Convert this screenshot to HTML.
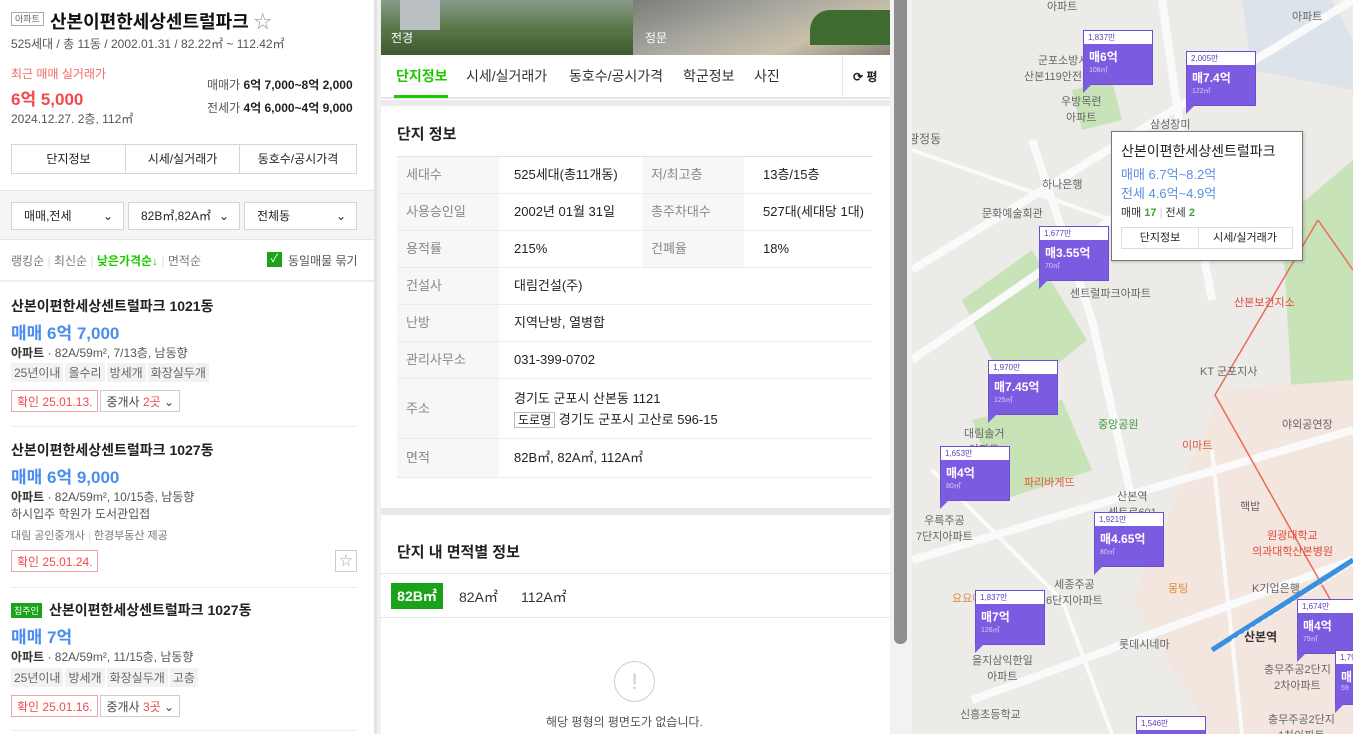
<!DOCTYPE html>
<html style="overflow:hidden;height:734px"><head><meta charset="utf-8"><style>
*{box-sizing:border-box;margin:0;padding:0}
body{width:1353px;height:734px;overflow:hidden;position:relative;font-family:"Liberation Sans","Noto Sans CJK KR",sans-serif;color:#222;background:#fff}
.a{position:absolute;white-space:nowrap}
.btn{position:absolute;border:1px solid #d5d5d5;font-size:12px;text-align:center;background:#fff}
.tag{display:inline-block;background:#f2f2f2;color:#666;font-size:12px;padding:1px 3px;margin-right:2px}
.cf{display:inline-block;border:1px solid #f4a3a3;color:#f2494d;font-size:12px;padding:2px 5px;height:22px}
.ag{display:inline-block;border:1px solid #ccc;color:#444;font-size:12px;padding:2px 5px;height:22px;margin-left:2px}
.row{position:absolute;left:397px;width:476px;border-bottom:1px solid #ececec;font-size:13px}
.row .l{position:absolute;left:0;top:0;bottom:0;width:102px;background:#f7f7f7;color:#888;padding-left:9px}
.row .l2{position:absolute;left:245px;top:0;bottom:0;width:102px;background:#f7f7f7;color:#888;padding-left:9px}
.mk{position:absolute;width:70px;height:55px;background:#7b5ce0;border:1px solid #6a4fd0}
.mk .h{background:#fff;color:#5a43b8;font-size:8px;height:13px;line-height:13px;padding-left:4px}
.mk .p{color:#fff;font-size:12px;font-weight:bold;padding:4px 0 0 5px}
.mk .s{color:#d8cff7;font-size:7px;padding-left:5px}
.mk:after{content:"";position:absolute;left:-1px;bottom:-9px;border-left:9px solid #7b5ce0;border-bottom:9px solid transparent}
.ml{position:absolute;font-size:11px;color:#666;text-align:center;white-space:nowrap}
</style></head><body>

<!-- LEFT PANEL -->
<div class="a" style="left:11px;top:12px;border:1px solid #aaa;font-size:9px;color:#666;padding:0 3px;line-height:12px">아파트</div>
<div class="a" style="left:50px;top:8px;font-size:18px;font-weight:bold;color:#111">산본이편한세상센트럴파크 <span style="font-weight:normal;color:#999">☆</span></div>
<div class="a" style="left:11px;top:35px;font-size:12px;color:#555">525세대 / 총 11동 / 2002.01.31 / 82.22㎡ ~ 112.42㎡</div>
<div class="a" style="left:11px;top:65px;font-size:12px;color:#f4666a">최근 매매 실거래가</div>
<div class="a" style="left:11px;top:85px;font-size:17px;font-weight:bold;color:#f2494d">6억 5,000</div>
<div class="a" style="left:11px;top:110px;font-size:12px;color:#555">2024.12.27. 2층, 112㎡</div>
<div class="a" style="left:207px;top:76px;font-size:12px;color:#555">매매가 <b style="color:#222">6억 7,000~8억 2,000</b></div>
<div class="a" style="left:207px;top:99px;font-size:12px;color:#555">전세가 <b style="color:#222">4억 6,000~4억 9,000</b></div>
<div class="btn" style="left:11px;top:144px;width:115px;height:30px;line-height:28px">단지정보</div>
<div class="btn" style="left:125px;top:144px;width:115px;height:30px;line-height:28px">시세/실거래가</div>
<div class="btn" style="left:239px;top:144px;width:118px;height:30px;line-height:28px">동호수/공시가격</div>
<div class="a" style="left:0;top:190px;width:374px;height:50px;background:#f5f5f5;border-top:1px solid #e5e5e5;border-bottom:1px solid #e5e5e5"></div>
<div class="btn" style="left:11px;top:202px;width:113px;height:28px;line-height:26px;text-align:left;padding-left:12px">매매,전세<span style="position:absolute;right:10px">⌄</span></div>
<div class="btn" style="left:128px;top:202px;width:112px;height:28px;line-height:26px;text-align:left;padding-left:12px">82B㎡,82A㎡<span style="position:absolute;right:10px">⌄</span></div>
<div class="btn" style="left:244px;top:202px;width:113px;height:28px;line-height:26px;text-align:left;padding-left:12px">전체동<span style="position:absolute;right:10px">⌄</span></div>
<div class="a" style="left:11px;top:252px;font-size:12px;color:#777">랭킹순 <span style="color:#ddd">|</span> 최신순 <span style="color:#ddd">|</span> <b style="color:#1ec800">낮은가격순↓</b> <span style="color:#ddd">|</span> 면적순</div>
<div class="a" style="left:267px;top:252px;width:15px;height:15px;background:#1aa31a;color:#fff;font-size:11px;text-align:center;line-height:15px">✓</div>
<div class="a" style="left:288px;top:252px;font-size:12px;color:#555">동일매물 묶기</div>
<div class="a" style="left:0;top:280px;width:374px;height:2px;background:#eee"></div>

<div class="a" style="left:11px;top:296px;font-size:14px;font-weight:bold;color:#222">산본이편한세상센트럴파크 1021동</div>
<div class="a" style="left:11px;top:319px;font-size:17px;font-weight:bold;color:#4a8cf0">매매 6억 7,000</div>
<div class="a" style="left:11px;top:344px;font-size:12px;color:#555"><b style="color:#333">아파트</b> · 82A/59m², 7/13층, 남동향</div>
<div class="a" style="left:11px;top:363px"><span class="tag">25년이내</span><span class="tag">올수리</span><span class="tag">방세개</span><span class="tag">화장실두개</span></div>
<div class="a" style="left:11px;top:390px"><span class="cf">확인 25.01.13.</span><span class="ag">중개사 <span style="color:#f2494d">2곳</span> ⌄</span></div>
<div class="a" style="left:11px;top:426px;width:346px;height:1px;background:#eee"></div>

<div class="a" style="left:11px;top:440px;font-size:14px;font-weight:bold">산본이편한세상센트럴파크 1027동</div>
<div class="a" style="left:11px;top:463px;font-size:17px;font-weight:bold;color:#4a8cf0">매매 6억 9,000</div>
<div class="a" style="left:11px;top:488px;font-size:12px;color:#555"><b style="color:#333">아파트</b> · 82A/59m², 10/15층, 남동향</div>
<div class="a" style="left:11px;top:505px;font-size:12px;color:#555">하시입주 학원가 도서관입접</div>
<div class="a" style="left:11px;top:527px;font-size:11px;color:#777">대림 공인중개사 <span style="color:#ddd">|</span> 한경부동산 제공</div>
<div class="a" style="left:11px;top:550px"><span class="cf">확인 25.01.24.</span></div>
<div class="a" style="left:335px;top:550px;width:22px;height:22px;border:1px solid #ccc;color:#aaa;font-size:13px;text-align:center;line-height:20px">☆</div>
<div class="a" style="left:11px;top:587px;width:346px;height:1px;background:#eee"></div>

<div class="a" style="left:11px;top:603px;background:#1aa31a;color:#fff;font-size:9px;padding:1px 3px">집주인</div>
<div class="a" style="left:49px;top:600px;font-size:14px;font-weight:bold">산본이편한세상센트럴파크 1027동</div>
<div class="a" style="left:11px;top:623px;font-size:17px;font-weight:bold;color:#4a8cf0">매매 7억</div>
<div class="a" style="left:11px;top:648px;font-size:12px;color:#555"><b style="color:#333">아파트</b> · 82A/59m², 11/15층, 남동향</div>
<div class="a" style="left:11px;top:668px"><span class="tag">25년이내</span><span class="tag">방세개</span><span class="tag">화장실두개</span><span class="tag">고층</span></div>
<div class="a" style="left:11px;top:695px"><span class="cf">확인 25.01.16.</span><span class="ag">중개사 <span style="color:#f2494d">3곳</span> ⌄</span></div>
<div class="a" style="left:11px;top:730px;width:346px;height:1px;background:#eee"></div>
<div class="a" style="left:374px;top:0;width:3px;height:734px;background:#e3e3e3"></div>
<div class="a" style="left:377px;top:0;width:4px;height:734px;background:#f0f0f0"></div>

<!-- MIDDLE PANEL -->
<div class="a" style="left:381px;top:0;width:252px;height:55px;background:linear-gradient(180deg,#8a9a8c 0%,#5d7c4e 45%,#3e5a30 100%)"></div>
<div class="a" style="left:400px;top:0;width:40px;height:30px;background:#b9bfc2"></div>
<div class="a" style="left:633px;top:0;width:257px;height:55px;background:linear-gradient(160deg,#7a7d78 0%,#a8a7a0 40%,#c9c0a8 70%,#8a8078 100%)"></div>
<div class="a" style="left:810px;top:10px;width:80px;height:35px;background:#3f6a30;border-radius:20px 0 0 0"></div>
<div class="a" style="left:391px;top:29px;font-size:12px;color:#fff">전경</div>
<div class="a" style="left:645px;top:29px;font-size:12px;color:#fff">정문</div>
<div class="a" style="left:381px;top:55px;width:509px;height:44px;background:#fff;border-bottom:2px solid #e5e5e5"></div>
<div class="a" style="left:396px;top:66px;font-size:14px;font-weight:bold;color:#1ec800">단지정보</div>
<div class="a" style="left:394px;top:95px;width:54px;height:3px;background:#1ec800"></div>
<div class="a" style="left:466px;top:66px;font-size:14px;color:#333">시세/실거래가</div>
<div class="a" style="left:569px;top:66px;font-size:14px;color:#333">동호수/공시가격</div>
<div class="a" style="left:683px;top:66px;font-size:14px;color:#333">학군정보</div>
<div class="a" style="left:754px;top:66px;font-size:14px;color:#333">사진</div>
<div class="a" style="left:842px;top:55px;width:48px;height:44px;border-left:1px solid #e5e5e5;font-size:12px;line-height:44px;padding-left:10px;font-weight:bold">⟳ 평</div>
<div class="a" style="left:381px;top:100px;width:509px;height:6px;background:#ebebeb"></div>
<div class="a" style="left:397px;top:123px;font-size:15px;font-weight:bold">단지 정보</div>
<div class="a" style="left:397px;top:156px;width:476px;height:1px;background:#e0e0e0"></div>
<div class="row" style="top:157px;height:37px;line-height:36px"><div class="l">세대수</div><span class="a" style="left:117px">525세대(총11개동)</span><div class="l2">저/최고층</div><span class="a" style="left:366px">13층/15층</span></div>
<div class="row" style="top:194px;height:37px;line-height:36px"><div class="l">사용승인일</div><span class="a" style="left:117px">2002년 01월 31일</span><div class="l2">총주차대수</div><span class="a" style="left:366px">527대(세대당 1대)</span></div>
<div class="row" style="top:231px;height:37px;line-height:36px"><div class="l">용적률</div><span class="a" style="left:117px">215%</span><div class="l2">건폐율</div><span class="a" style="left:366px">18%</span></div>
<div class="row" style="top:268px;height:37px;line-height:36px"><div class="l">건설사</div><span class="a" style="left:117px">대림건설(주)</span></div>
<div class="row" style="top:305px;height:37px;line-height:36px"><div class="l">난방</div><span class="a" style="left:117px">지역난방, 열병합</span></div>
<div class="row" style="top:342px;height:37px;line-height:36px"><div class="l">관리사무소</div><span class="a" style="left:117px">031-399-0702</span></div>
<div class="row" style="top:379px;height:60px"><div class="l" style="line-height:60px">주소</div><span class="a" style="left:117px;top:9px">경기도 군포시 산본동 1121</span><span class="a" style="left:117px;top:30px"><span style="border:1px solid #bbb;padding:0 3px;font-size:12px">도로명</span> 경기도 군포시 고산로 596-15</span></div>
<div class="row" style="top:439px;height:39px;line-height:38px"><div class="l">면적</div><span class="a" style="left:117px">82B㎡, 82A㎡, 112A㎡</span></div>
<div class="a" style="left:381px;top:508px;width:509px;height:7px;background:#e8e8e8"></div>
<div class="a" style="left:397px;top:541px;font-size:15px;font-weight:bold">단지 내 면적별 정보</div>
<div class="a" style="left:381px;top:573px;width:509px;height:1px;background:#e5e5e5"></div>
<div class="a" style="left:391px;top:583px;width:52px;height:26px;background:#1aa31a;color:#fff;font-size:14px;font-weight:bold;line-height:26px;text-align:center">82B㎡</div>
<div class="a" style="left:459px;top:587px;font-size:14px;color:#333">82A㎡</div>
<div class="a" style="left:521px;top:587px;font-size:14px;color:#333">112A㎡</div>
<div class="a" style="left:381px;top:617px;width:509px;height:1px;background:#e5e5e5"></div>
<div class="a" style="left:614px;top:661px;width:41px;height:41px;border:1px solid #ccc;border-radius:50%;color:#ccc;font-size:22px;text-align:center;line-height:39px">!</div>
<div class="a" style="left:546px;top:713px;font-size:12px;color:#555">해당 평형의 평면도가 없습니다.</div>
<div class="a" style="left:890px;top:0;width:22px;height:734px;background:#f2f2f2"></div>
<div class="a" style="left:894px;top:0;width:13px;height:644px;background:#8f8f8f;border-radius:0 0 6px 6px"></div>

<!-- MAP -->
<div class="a" style="left:912px;top:0;width:441px;height:734px;background:#ecebe8;overflow:hidden">
<svg width="441" height="734" style="position:absolute;left:0;top:0">
<g fill="#c8e3b8"><path d="M50 300 L120 250 L175 340 L100 400Z"/><path d="M60 420 L150 400 L180 470 L90 500Z"/><path d="M370 220 L441 160 L441 380 L380 400Z"/><path d="M160 90 L200 80 L210 120 L170 130Z"/></g>
<g fill="#f3e6df"><path d="M310 390 L441 380 L441 734 L300 734 L220 600Z"/></g>
<g fill="#dde3ea"><path d="M330 0 L420 0 L441 40 L441 90 L340 70Z"/></g>
<g stroke="#fafafa" stroke-width="8" fill="none"><path d="M0 270 L441 0"/><path d="M0 360 L160 250 L300 140"/><path d="M120 140 L180 320 L220 500"/><path d="M0 560 L200 500 L441 430"/><path d="M60 700 L441 560"/><path d="M250 0 L270 140 L300 300"/></g>
<g stroke="#fafafa" stroke-width="4" fill="none"><path d="M0 150 L200 220"/><path d="M20 470 L150 600 L200 734"/><path d="M300 450 L330 734"/></g>
<path d="M406 220 L441 270 M406 220 L303 395 L441 640" stroke="#ee6a5a" stroke-width="1.5" fill="none"/>
<path d="M300 650 L441 560" stroke="#3b8fe0" stroke-width="5" fill="none"/>
<path d="M320 640 L441 565" stroke="#fff" stroke-width="1" stroke-dasharray="4 3" fill="none"/>
</svg>
<div class="ml" style="left:135px;top:-2px">아파트</div><div class="ml" style="left:380px;top:8px">아파트</div>
<div class="ml" style="left:112px;top:52px">군포소방서<br>산본119안전센터</div>
<div class="ml" style="left:149px;top:93px">우방목련<br>아파트</div>
<div class="ml" style="left:238px;top:116px">삼성장미</div>
<div class="ml" style="left:-4px;top:130px;font-size:12px">광정동</div>
<div class="ml" style="left:130px;top:176px">하나은행</div>
<div class="ml" style="left:70px;top:205px">문화예술회관</div>
<div class="ml" style="left:158px;top:285px">센트럴파크아파트</div>
<div class="ml" style="left:322px;top:294px;color:#e04a3a">산본보건지소</div>
<div class="ml" style="left:288px;top:363px">KT 군포지사</div>
<div class="ml" style="left:186px;top:416px;color:#3a9a3a">중앙공원</div>
<div class="ml" style="left:270px;top:437px;color:#e05a3a">이마트</div>
<div class="ml" style="left:52px;top:425px">대림솔거<br>아파트</div>
<div class="ml" style="left:370px;top:416px">야외공연장</div>
<div class="ml" style="left:112px;top:474px;color:#e05a3a">파리바게뜨</div>
<div class="ml" style="left:196px;top:488px">산본역<br>센트로601</div>
<div class="ml" style="left:4px;top:512px">우륵주공<br>7단지아파트</div>
<div class="ml" style="left:328px;top:498px">핵밥</div>
<div class="ml" style="left:340px;top:527px;color:#e04a3a">원광대학교<br>의과대학산본병원</div>
<div class="ml" style="left:220px;top:542px;color:#e08a3a">도어</div>
<div class="ml" style="left:134px;top:576px">세종주공<br>6단지아파트</div>
<div class="ml" style="left:256px;top:580px;color:#e08a3a">몽팅</div>
<div class="ml" style="left:340px;top:580px">K기업은행</div>
<div class="ml" style="left:40px;top:590px;color:#e08a3a">요요여</div>
<div class="ml" style="left:332px;top:628px;font-size:12px;font-weight:bold;color:#333">산본역</div>
<div class="ml" style="left:207px;top:636px">롯데시네마</div>
<div class="ml" style="left:60px;top:652px">을지삼익한일<br>아파트</div>
<div class="ml" style="left:352px;top:661px">충무주공2단지<br>2차아파트</div>
<div class="ml" style="left:48px;top:706px">신흥초등학교</div>
<div class="ml" style="left:356px;top:711px">충무주공2단지<br>1차아파트</div>

<div class="mk" style="left:171px;top:30px"><div class="h">1,837만</div><div class="p">매6억</div><div class="s">108㎡</div></div>
<div class="mk" style="left:274px;top:51px"><div class="h">2,005만</div><div class="p">매7.4억</div><div class="s">122㎡</div></div>
<div class="mk" style="left:127px;top:226px"><div class="h">1,677만</div><div class="p">매3.55억</div><div class="s">70㎡</div></div>
<div class="mk" style="left:76px;top:360px"><div class="h">1,970만</div><div class="p">매7.45억</div><div class="s">125㎡</div></div>
<div class="mk" style="left:28px;top:446px"><div class="h">1,653만</div><div class="p">매4억</div><div class="s">80㎡</div></div>
<div class="mk" style="left:182px;top:512px"><div class="h">1,921만</div><div class="p">매4.65억</div><div class="s">80㎡</div></div>
<div class="mk" style="left:63px;top:590px"><div class="h">1,837만</div><div class="p">매7억</div><div class="s">126㎡</div></div>
<div class="mk" style="left:385px;top:599px"><div class="h">1,674만</div><div class="p">매4억</div><div class="s">79㎡</div></div>
<div class="mk" style="left:423px;top:650px"><div class="h">1,79</div><div class="p">매</div><div class="s">59</div></div>
<div class="mk" style="left:224px;top:716px"><div class="h">1,546만</div><div class="p"></div></div>

<div class="a" style="left:199px;top:131px;width:192px;height:130px;background:#fff;border:1px solid #777;box-shadow:1px 1px 3px rgba(0,0,0,.2)">
<div class="a" style="left:9px;top:9px;font-size:14px;color:#222">산본이편한세상센트럴파크</div>
<div class="a" style="left:9px;top:32px;font-size:13px;color:#5a8fe0">매매 6.7억~8.2억</div>
<div class="a" style="left:9px;top:51px;font-size:13px;color:#5a8fe0">전세 4.6억~4.9억</div>
<div class="a" style="left:9px;top:72px;font-size:11px;color:#333">매매 <b style="color:#3aa33a">17</b> <span style="color:#ccc">|</span> 전세 <b style="color:#3aa33a">2</b></div>
<div class="a" style="left:9px;top:95px;width:172px;height:22px;border:1px solid #ddd;font-size:11px;line-height:20px"><span style="display:inline-block;width:77px;text-align:center;border-right:1px solid #ddd">단지정보</span><span style="display:inline-block;width:92px;text-align:center">시세/실거래가</span></div>
</div>
</div>
</body></html>
